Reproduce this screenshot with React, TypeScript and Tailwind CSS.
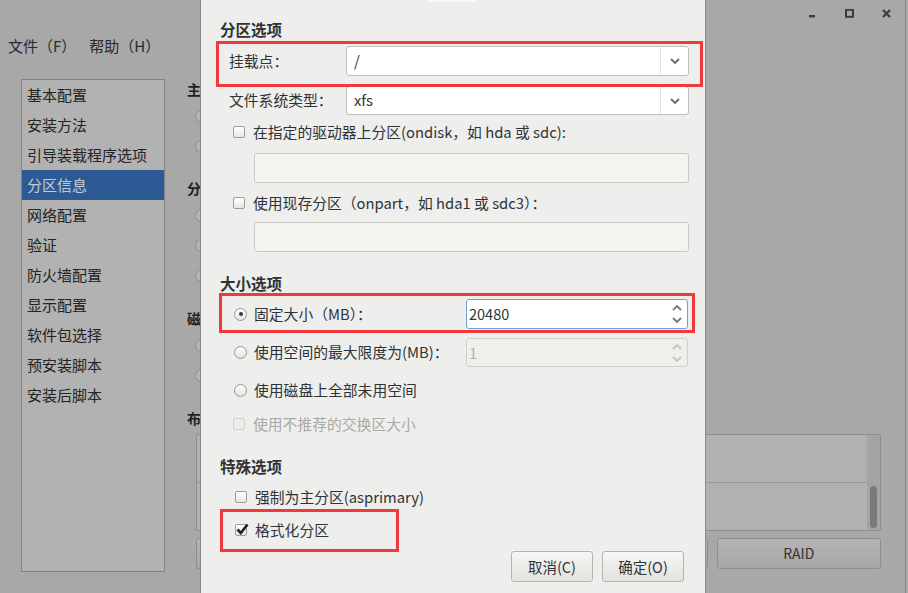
import React from "react";

const sidebarItems = [
  "基本配置",
  "安装方法",
  "引导装载程序选项",
  "分区信息",
  "网络配置",
  "验证",
  "防火墙配置",
  "显示配置",
  "软件包选择",
  "预安装脚本",
  "安装后脚本",
];

function Chevron({ up = false, color = "#6b6b6b" }: { up?: boolean; color?: string }) {
  return (
    <svg width="10" height="6" viewBox="0 0 10 6">
      <path
        d={up ? "M1 5 L5 1 L9 5" : "M1 1 L5 5 L9 1"}
        fill="none"
        stroke={color}
        strokeWidth="1.8"
      />
    </svg>
  );
}

function Combo({ value }: { value: string }) {
  return (
    <div className="flex h-full flex-1 items-center rounded-[3px] border border-[#bdbdb9] bg-white">
      <span className="flex-1 pl-[7px] text-[#2e3436]">{value}</span>
      <span className="flex h-full w-[28px] items-center justify-center border-l border-[#e2e2de]">
        <Chevron />
      </span>
    </div>
  );
}

function Checkbox({ checked = false, disabled = false }: { checked?: boolean; disabled?: boolean }) {
  return (
    <span
      className={`relative inline-block h-[12px] w-[12px] shrink-0 rounded-[2px] border ${
        disabled ? "border-[#cfcfcb] bg-[#ececea]" : "border-[#9c9c98] bg-gradient-to-b from-white to-[#e6e6e3]"
      }`}
    >
      {checked && (
        <svg className="absolute -top-[2px] left-[0px]" width="13" height="12" viewBox="0 0 13 12">
          <path d="M1.5 6.5 L4.8 10 L11.5 1.5" fill="none" stroke="#1e1e1e" strokeWidth="2.6" />
        </svg>
      )}
    </span>
  );
}

function Radio({ checked = false }: { checked?: boolean }) {
  return (
    <span className="flex h-[13px] w-[13px] shrink-0 items-center justify-center rounded-full border border-[#959591] bg-gradient-to-b from-white to-[#e4e4e1]">
      {checked && <span className="h-[4px] w-[4px] rounded-full bg-[#3a3a3a]" />}
    </span>
  );
}

function Spin({ value, disabled = false }: { value: string; disabled?: boolean }) {
  return (
    <div
      className={`flex h-full w-[222px] items-center rounded-[3px] border ${
        disabled ? "border-[#d0d0cc] bg-[#efefec]" : "border-[#6f9fd6] bg-white"
      }`}
    >
      <span className={`flex-1 pl-[2px] text-[14.5px] ${disabled ? "text-[#b0b0ae]" : "text-[#2e3436]"}`}>
        {value}
      </span>
      <span className="flex w-[18px] flex-col items-center gap-[6px] pr-[2px]">
        <Chevron up color={disabled ? "#c4c4c2" : "#777"} />
        <Chevron color={disabled ? "#c4c4c2" : "#777"} />
      </span>
    </div>
  );
}

function BgRadio({ mt = "" }: { mt?: string }) {
  return (
    <div className={`flex h-[30px] items-center pl-[8px] ${mt}`}>
      <span className="h-[13px] w-[13px] rounded-full border border-[#8c8c8c] bg-[#b4b4b4]" />
    </div>
  );
}

function DlgButton({ label }: { label: string }) {
  return (
    <button className="h-[31px] w-[82px] rounded-[3px] border border-[#b3b3af] bg-gradient-to-b from-[#f6f6f4] to-[#e2e2de] text-[14.5px] text-[#2e3436]">
      {label}
    </button>
  );
}

export default function App() {
  return (
    <div className="relative h-[593px] w-[908px] overflow-hidden bg-[#a8a8a8] font-['Noto_Sans_CJK_SC',sans-serif] text-[14px] text-[#222]">
      {/* background window */}
      <div className="flex h-[30px] items-start justify-end gap-[23px] pr-[14px] pt-[9px]">
        <svg width="14" height="10" viewBox="0 0 14 10">
          <rect x="3" y="6" width="6" height="2.4" fill="#3c3c3c" />
        </svg>
        <svg width="14" height="10" viewBox="0 0 14 10">
          <rect x="3" y="0.8" width="7" height="7" fill="none" stroke="#3c3c3c" strokeWidth="2" />
        </svg>
        <svg width="14" height="10" viewBox="0 0 14 10">
          <path d="M3 1 L10 8 M10 1 L3 8" stroke="#3c3c3c" strokeWidth="2.2" />
        </svg>
      </div>
      <div className="flex h-[32px] items-center gap-[13px] pl-[8px] text-[15px] text-[#2a2a2a]">
        <span>文件（F）</span>
        <span>帮助（H）</span>
      </div>
      <div className="mt-[17px] flex">
        <div className="ml-[21px] h-[493px] w-[144px] border border-[#808080] bg-[#b2b2b2]">
          {sidebarItems.map((item, i) => (
            <div
              key={item}
              className={`flex h-[30px] items-center pl-[5px] text-[15px] ${
                i === 3 ? "bg-[#2c5a95] text-[#c3cad6]" : "text-[#232323]"
              }`}
            >
              {item}
            </div>
          ))}
        </div>
        <div className="ml-[22px] flex w-[700px] flex-col">
          <div className="h-[20px] font-bold leading-[20px]">主</div>
          <BgRadio mt="mt-[2px]" />
          <BgRadio />
          <div className="mt-[17px] h-[20px] font-bold leading-[20px]">分</div>
          <BgRadio mt="mt-[2px]" />
          <BgRadio />
          <BgRadio />
          <div className="mt-[18px] h-[20px] font-bold leading-[20px]">磁</div>
          <BgRadio mt="mt-[2px]" />
          <BgRadio />
          <div className="mt-[18px] h-[20px] font-bold leading-[20px]">布</div>
          <div className="ml-[9px] mt-[6px] flex h-[97px] w-[685px] rounded-[2px] border border-[#8e8e8e] bg-[#b1b1b1]">
            <div className="flex flex-1 flex-col">
              <div className="h-[48px] border-b border-[#999]" />
              <div className="flex-1" />
            </div>
            <div className="flex w-[13px] flex-col justify-end bg-[#a4a4a4] px-[3px] pb-[2px]">
              <div className="h-[42px] rounded-[4px] bg-[#7a7a7a]" />
            </div>
          </div>
          <div className="ml-[9px] mt-[7px] grid w-[685px] grid-cols-4 gap-[9px]">
            <div className="h-[31px] rounded-[3px] border border-[#8e8e8e] bg-gradient-to-b from-[#b4b4b4] to-[#a7a7a7]" />
            <div className="h-[31px] rounded-[3px] border border-[#8e8e8e] bg-gradient-to-b from-[#b4b4b4] to-[#a7a7a7]" />
            <div className="h-[31px] rounded-[3px] border border-[#8e8e8e] bg-gradient-to-b from-[#b4b4b4] to-[#a7a7a7]" />
            <div className="flex h-[31px] items-center justify-center rounded-[3px] border border-[#8e8e8e] bg-gradient-to-b from-[#b4b4b4] to-[#a7a7a7] text-[14px] text-[#333]">
              RAID
            </div>
          </div>
        </div>
      </div>
      <div className="absolute right-[2px] top-0 h-[593px] w-px bg-[#8a8a8a]" />

      {/* dialog */}
      <div className="absolute left-[200px] top-0 flex h-[593px] w-[506px] flex-col border-x border-[#8b8b8b] bg-[#eeeeec] pl-[19px] pr-[16px] text-[14.8px] text-[#2e3436]">
        <div className="absolute left-[226px] top-0 h-[2px] w-[50px] bg-[#f8f8f8]" />
        <div className="mt-[19px] h-[20px] text-[15.5px] font-bold leading-[20px]">分区选项</div>
        <div className="mt-[7px] flex h-[30px] items-center">
          <span className="w-[126px] pl-[9px]">挂载点：</span>
          <Combo value="/" />
        </div>
        <div className="mt-[10px] flex h-[29px] items-center">
          <span className="w-[126px] pl-[9px]">文件系统类型：</span>
          <Combo value="xfs" />
        </div>
        <div className="mt-[7px] flex h-[20px] items-center gap-[8px] pl-[13px]">
          <Checkbox />
          <span>在指定的驱动器上分区(ondisk，如 hda 或 sdc):</span>
        </div>
        <div className="ml-[34px] mt-[11px] h-[30px] rounded-[3px] border border-[#c9c9c5] bg-[#f4f4f0]" />
        <div className="mt-[10px] flex h-[20px] items-center gap-[8px] pl-[13px]">
          <Checkbox />
          <span>使用现存分区（onpart，如 hda1 或 sdc3）：</span>
        </div>
        <div className="ml-[34px] mt-[9px] h-[30px] rounded-[3px] border border-[#c9c9c5] bg-[#f4f4f0]" />

        <div className="mt-[21px] h-[20px] text-[15.5px] font-bold leading-[20px]">大小选项</div>
        <div className="mt-[6px] flex h-[30px] items-center">
          <span className="flex w-[246px] items-center gap-[7px] pl-[14px]">
            <Radio checked />
            固定大小（MB）：
          </span>
          <Spin value="20480" />
        </div>
        <div className="mt-[9px] flex h-[29px] items-center">
          <span className="flex w-[246px] items-center gap-[7px] pl-[14px]">
            <Radio />
            使用空间的最大限度为(MB)：
          </span>
          <Spin value="1" disabled />
        </div>
        <div className="mt-[13px] flex h-[20px] items-center gap-[7px] pl-[14px]">
          <Radio />
          <span>使用磁盘上全部未用空间</span>
        </div>
        <div className="mt-[14px] flex h-[20px] items-center gap-[8px] pl-[13px] text-[#a9a9a7]">
          <Checkbox disabled />
          <span>使用不推荐的交换区大小</span>
        </div>

        <div className="mt-[22px] h-[20px] text-[15.5px] font-bold leading-[20px]">特殊选项</div>
        <div className="mt-[11px] flex h-[20px] items-center gap-[8px] pl-[15px]">
          <Checkbox />
          <span>强制为主分区(asprimary)</span>
        </div>
        <div className="mt-[13px] flex h-[20px] items-center gap-[8px] pl-[15px]">
          <Checkbox checked />
          <span>格式化分区</span>
        </div>
        <div className="mt-[11px] flex justify-end gap-[9px] pr-[5px]">
          <DlgButton label="取消(C)" />
          <DlgButton label="确定(O)" />
        </div>
      </div>

      {/* red annotation boxes */}
      <div className="absolute left-[216px] top-[41px] h-[46px] w-[487px] border-[3px] border-[#f0393c]" />
      <div className="absolute left-[219px] top-[293px] h-[40px] w-[476px] border-[3px] border-[#f0393c]" />
      <div className="absolute left-[220px] top-[509px] h-[43px] w-[179px] border-[3px] border-[#f0393c]" />
    </div>
  );
}
